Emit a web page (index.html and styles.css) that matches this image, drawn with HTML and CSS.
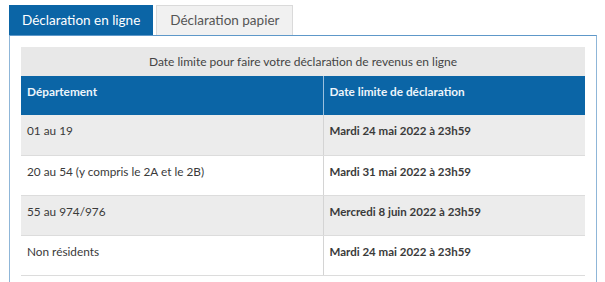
FILE: index.html
```html
<!DOCTYPE html>
<html lang="fr">
<head>
<meta charset="utf-8">
<link rel="stylesheet" href="styles.css">
</head>
<body>
<div class="tabs">
  <div class="tab active">Déclaration en ligne</div>
  <div class="tab">Déclaration papier</div>
</div>
<div class="panel">
  <table class="dates">
    <caption>Date limite pour faire votre déclaration de revenus en ligne</caption>
    <thead>
      <tr><th class="c1">Département</th><th>Date limite de déclaration</th></tr>
    </thead>
    <tbody>
      <tr class="odd"><td>01 au 19</td><td class="b">Mardi 24 mai 2022 à 23h59</td></tr>
      <tr><td>20 au 54 (y compris le 2A et le 2B)</td><td class="b">Mardi 31 mai 2022 à 23h59</td></tr>
      <tr class="odd"><td>55 au 974/976</td><td class="b">Mercredi 8 juin 2022 à 23h59</td></tr>
      <tr><td>Non résidents</td><td class="b">Mardi 24 mai 2022 à 23h59</td></tr>
    </tbody>
  </table>
</div>
</body>
</html>
```

FILE: styles.css
```css
html, body { margin: 0; padding: 0; background: #fff; }
body {
  padding: 5px 8px 0 9px;
  font-family: Lato, "Open Sans", sans-serif;
  color: #3a3a3a;
}
.tabs { display: flex; gap: 3px; align-items: flex-end; }
.tab {
  height: 30px;
  line-height: 30px;
  padding: 0 13px;
  font-size: 13.5px;
  box-sizing: border-box;
}
.tab.active { background: #0b65a6; color: #fff; }
.tab:not(.active) {
  background: #f1f1f1;
  color: #555;
  border: 1px solid #dadada;
  border-bottom: none;
  line-height: 28px;
}
.panel {
  border: 1px solid #8fb6d8;
  border-top-color: #5e98c9;
  border-bottom: none;
  padding: 11px 11px 0 11px;
  height: 250px;
  box-sizing: border-box;
}
.dates { width: 100%; border-collapse: collapse; font-size: 11.8px; }
.dates caption {
  background: #e8e8e8;
  height: 29px;
  line-height: 29px;
  text-align: center;
  color: #444;
  font-size: 12px;
}
.dates th {
  background: #0b65a6;
  color: #eef5fb;
  text-align: left;
  font-weight: 700;
  height: 39px;
  vertical-align: top;
  padding: 7px 7px 0 6px;
  box-sizing: border-box;
  line-height: 18px;
  font-size: 11.8px;
}
.dates th.c1, .dates td:first-child { width: 302px; border-right: 1px solid #d4d4d4; }
.dates th.c1 { border-right-color: #9cc0de; }
.dates td {
  height: 40px;
  vertical-align: top;
  padding: 7px 7px 0 6px;
  box-sizing: border-box;
  line-height: 18px;
  border-bottom: 1px solid #dcdcdc;
}
.dates tr.odd td { background: #ececec; }
.dates td.b { font-weight: 700; color: #3a3a3a; font-size: 11.5px; }
```
